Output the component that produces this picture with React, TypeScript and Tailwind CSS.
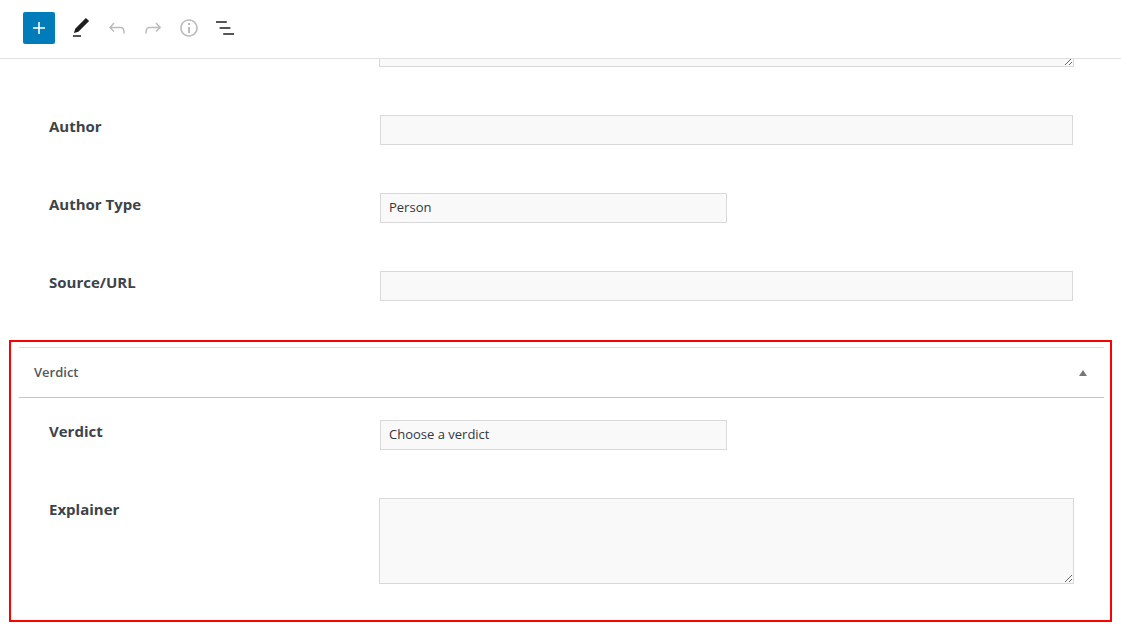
import { useState } from 'react';
import type { ReactNode } from 'react';

const fieldClass =
  'h-[30px] rounded-none border border-[#d9d9d9] bg-[#f9f9f9] px-2 text-[13px] text-[#32373c] outline-none focus:border-[#007cba]';

const textareaClass =
  'block h-[86px] flex-1 resize-y rounded-none border border-[#d9d9d9] bg-[#f9f9f9] px-2 py-1 text-[13px] text-[#32373c] outline-none focus:border-[#007cba]';

function FieldRow({ id, label, children }: { id: string; label: string; children: ReactNode }) {
  return (
    <div className="flex items-start">
      <label htmlFor={id} className="w-[331px] shrink-0 text-[15px] leading-[22px] font-bold text-[#3c434a]">
        {label}
      </label>
      <div className="flex min-w-0 flex-1">{children}</div>
    </div>
  );
}

function Toolbar() {
  return (
    <header className="flex items-center gap-[10px] border-b border-[#e0e0e0] bg-white px-[23px] pt-3 pb-[14px]">
      <button type="button" aria-label="Add block" className="flex size-8 items-center justify-center rounded-xs bg-[#007cba] text-white">
        <svg viewBox="0 0 24 24" className="size-6" fill="currentColor">
          <path d="M18 11.2h-5.2V6h-1.6v5.2H6v1.6h5.2V18h1.6v-5.2H18z" />
        </svg>
      </button>
      <div className="flex items-center gap-3 pl-1">
        <button type="button" aria-label="Tools" className="text-[#1e1e1e]">
          <svg viewBox="0 0 24 24" className="size-6" fill="currentColor">
            <path d="M20.1 5.1L16.9 2 6.2 12.7l-1.3 4.4 4.5-1.3L20.1 5.1zM4 20.8h8v-1.5H4v1.5z" />
          </svg>
        </button>
        <button type="button" aria-label="Undo" disabled className="text-[#bbb]">
          <svg viewBox="0 0 24 24" className="size-6" fill="currentColor">
            <path d="M18.3 11.7c-.6-.6-1.4-.9-2.3-.9H6.7l2.9-3.3-1.1-1-4.5 5L8.5 16l1-1-2.7-2.7H16c.5 0 .9.2 1.3.5 1 1 1 3.4 1 4.5v.3h1.5v-.2c0-1.5 0-4.3-1.5-5.7z" />
          </svg>
        </button>
        <button type="button" aria-label="Redo" disabled className="text-[#bbb]">
          <svg viewBox="0 0 24 24" className="size-6" fill="currentColor">
            <path d="M15.6 6.5l-1.1 1 2.9 3.3H8c-.9 0-1.7.3-2.3.9-1.4 1.5-1.4 4.2-1.4 5.6v.2h1.5v-.3c0-1.1 0-3.5 1-4.5.3-.3.7-.5 1.3-.5h9.2L14.5 15l1.1 1.1 4.6-4.6-4.6-5z" />
          </svg>
        </button>
        <button type="button" aria-label="Details" disabled className="text-[#bbb]">
          <svg viewBox="0 0 24 24" className="size-6" fill="currentColor">
            <path d="M12 3.2c-4.8 0-8.8 3.9-8.8 8.8 0 4.8 3.9 8.8 8.8 8.8 4.8 0 8.8-3.9 8.8-8.8 0-4.8-4-8.8-8.8-8.8zm0 16c-4 0-7.2-3.3-7.2-7.2C4.8 8 8 4.8 12 4.8s7.2 3.3 7.2 7.2c0 4-3.2 7.2-7.2 7.2zM11 17h2v-6h-2v6zm0-8h2V7h-2v2z" />
          </svg>
        </button>
        <button type="button" aria-label="Outline" className="text-[#1e1e1e]">
          <svg viewBox="0 0 24 24" className="size-6" fill="currentColor">
            <path d="M13.8 5.2H3v1.5h10.8V5.2zm-3.6 12v1.5H21v-1.5H10.2zm7.2-6H6.6v1.5h10.8v-1.5z" />
          </svg>
        </button>
      </div>
    </header>
  );
}

function App() {
  const [open, setOpen] = useState(true);

  return (
    <div className="min-h-screen bg-white font-['Open_Sans','Noto_Sans',sans-serif]">
      <Toolbar />

      <main className="px-[9px] pb-1">
        <div className="flex flex-col gap-12 pr-[39px] pb-[39px] pl-10">
          {/* only the tail of the claim box shows under the toolbar */}
          <div className="-mr-px flex h-2 items-end overflow-hidden pl-[330px]">
            <textarea aria-label="Claim" className={textareaClass} />
          </div>
          <FieldRow id="author" label="Author">
            <input id="author" type="text" className={`${fieldClass} w-full`} />
          </FieldRow>
          <FieldRow id="author-type" label="Author Type">
            <select id="author-type" className={`${fieldClass} w-1/2 appearance-none`}>
              <option>Person</option>
              <option>Organization</option>
            </select>
          </FieldRow>
          <FieldRow id="source" label="Source/URL">
            <input id="source" type="text" className={`${fieldClass} w-full`} />
          </FieldRow>
        </div>

        <section className="border-2 border-[#ff0000] pt-[5px] pr-[6px] pb-9 pl-2">
          <h2 className="border-t border-b border-t-[#dcdde0] border-b-[#c3c4c7]">
            <button
              type="button"
              aria-expanded={open}
              onClick={() => setOpen(!open)}
              className="flex h-[49px] w-full items-center justify-between pr-[17px] pl-[15px] text-[13px] font-semibold text-[#50575e]"
            >
              Verdict
              <svg viewBox="0 0 8 6" className={open ? 'h-[6px] w-2' : 'h-[6px] w-2 rotate-180'} fill="#72777c">
                <path d="M4 0l4 6H0z" />
              </svg>
            </button>
          </h2>
          {open && (
            <div className="flex flex-col gap-12 pt-[22px] pr-[31px] pl-[30px]">
              <FieldRow id="verdict" label="Verdict">
                <select id="verdict" className={`${fieldClass} w-1/2 appearance-none`}>
                  <option>Choose a verdict</option>
                  <option>True</option>
                  <option>False</option>
                </select>
              </FieldRow>
              <FieldRow id="explainer" label="Explainer">
                <textarea id="explainer" className={`${textareaClass} -mx-px`} />
              </FieldRow>
            </div>
          )}
        </section>
      </main>
    </div>
  );
}

export default App;
